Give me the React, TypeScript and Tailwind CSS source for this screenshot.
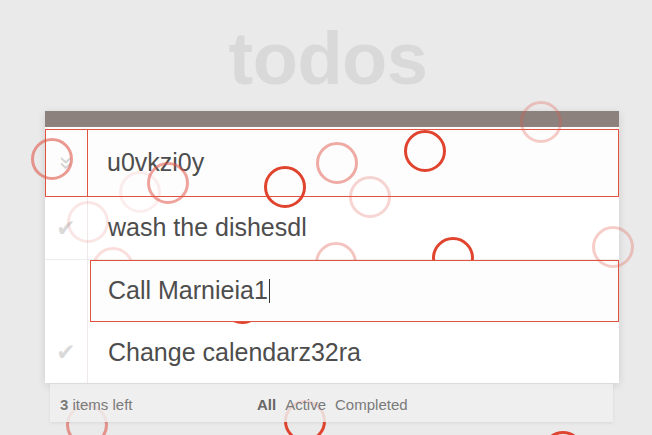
import React from "react";

type Circle = { x: number; y: number; o: number; c: string };

const circles: Circle[] = [
  { x: 52, y: 159, o: 0.6, c: "#e0584a" },
  { x: 168, y: 183, o: 0.55, c: "#e0584a" },
  { x: 285, y: 187, o: 1, c: "#e0442f" },
  { x: 337, y: 163, o: 0.5, c: "#e0584a" },
  { x: 370, y: 197, o: 0.25, c: "#e0584a" },
  { x: 425, y: 151, o: 1, c: "#e0442f" },
  { x: 541, y: 122, o: 0.3, c: "#e0584a" },
  { x: 613, y: 247, o: 0.3, c: "#e0584a" },
  { x: 88, y: 222, o: 0.15, c: "#e0584a" },
  { x: 140, y: 192, o: 0.1, c: "#e0584a" },
  { x: 563, y: 452, o: 1, c: "#e0442f" },
];

const lowCircles: Circle[] = [
  { x: 336, y: 263, o: 0.35, c: "#e0584a" },
  { x: 453, y: 258, o: 1, c: "#e0442f" },
  { x: 242, y: 303, o: 1, c: "#e0442f" },
  { x: 113, y: 268, o: 0.2, c: "#e0584a" },
  { x: 87, y: 425, o: 0.6, c: "#e0584a" },
  { x: 305, y: 421, o: 1, c: "#e0442f" },
];

function Ring({ x, y, o, c }: Circle) {
  return (
    <div
      className="absolute w-[42px] h-[42px] rounded-full border-[3px] pointer-events-none"
      style={{ left: x - 21, top: y - 21, opacity: o, borderColor: c }}
    />
  );
}

function Check() {
  return (
    <div className="w-[43px] shrink-0 flex items-center justify-center border-r border-[#efe9e9] self-stretch">
      <span className="text-[23px] text-[#d9d9d9] font-['DejaVu_Sans',sans-serif] leading-none">✔</span>
    </div>
  );
}

export default function App() {
  return (
    <div className="relative w-[652px] h-[435px] overflow-hidden bg-[#eaeaea] font-['Liberation_Sans',Arial,sans-serif] text-[#4d4d4d]">
      <h1 className="h-[111px] pt-[22px] text-center text-[74px] font-bold leading-none text-[#d9d9d9] tracking-[-0.5px] pl-[4px]">
        todos
      </h1>

      <div className="ml-[45px] w-[574px] bg-white shadow-[0_2px_8px_rgba(0,0,0,0.12)]">
        <div className="h-[16px] bg-[#8c817d]" />

        <div className="h-[70px] pt-[2px] bg-[#fdfdfd]">
          <div className="h-[68px] flex border border-[#e0533f]">
            <div className="w-[42px] shrink-0 border-r border-[#e0533f] flex items-center justify-center">
              <span className="inline-block rotate-90 text-[24px] text-[#d2d2d2] leading-none">»</span>
            </div>
            <div className="flex items-center pl-[19px] text-[25px]">u0vkzi0y</div>
          </div>
        </div>

        <div className="h-[63px] flex items-stretch border-b border-[#ededed]">
          <Check />
          <div className="flex items-center pl-[20px] text-[25px]">wash the dishesdl</div>
        </div>

        <div className="h-[62px] flex items-stretch">
          <div className="w-[45px] shrink-0 flex">
            <div className="w-[43px] border-r border-[#efe9e9]" />
          </div>
          <div className="relative z-20 flex-1 flex items-center pl-[17px] text-[25px] border border-[#e0533f] bg-[#fdfdfd]">
            Call Marnieia1
            <span className="inline-block w-px h-[24px] bg-[#333] ml-[1px]" />
          </div>
        </div>

        <div className="h-[61px] flex items-stretch">
          <Check />
          <div className="flex items-center pl-[20px] text-[25px]">Change calendarz32ra</div>
        </div>
      </div>

      <div className="relative z-20 ml-[50px] w-[563px] h-[39px] pt-[4px] bg-[#f0f0f0]/85 border-t border-[#dcdcdc] shadow-[0_1px_3px_rgba(0,0,0,0.08)] flex items-center text-[15px] text-[#7a7a7a]">
        <div className="pl-[10px] w-[207px]">
          <span className="font-bold">3</span> items left
        </div>
        <div className="flex gap-[9px]">
          <span className="font-bold text-[#666]">All</span>
          <span>Active</span>
          <span>Completed</span>
        </div>
      </div>

      <div className="absolute inset-0 z-10 pointer-events-none">
        {lowCircles.map((c, i) => (
          <Ring key={i} {...c} />
        ))}
      </div>
      <div className="absolute inset-0 z-30 pointer-events-none">
        {circles.map((c, i) => (
          <Ring key={i} {...c} />
        ))}
      </div>
    </div>
  );
}
